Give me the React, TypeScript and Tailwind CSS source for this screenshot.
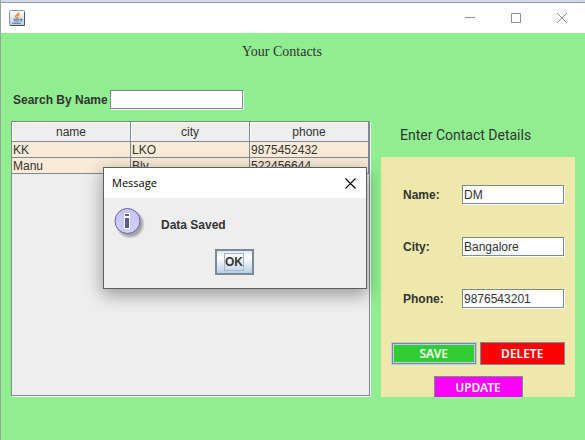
import { useState } from 'react';

const contacts = [
  { name: 'KK', city: 'LKO', phone: '9875452432' },
  { name: 'Manu', city: 'Blv', phone: '522456644' },
];

const columns = ['name', 'city', 'phone'];

const fieldClass =
  'h-[19px] border border-[#7a8a99] bg-white px-px pt-px text-xs text-[#333] shadow-[1px_1px_0_white] outline-none';

const cellClass = 'h-4 border-r border-b border-[#7a8a99] p-0 pt-[2px] pl-px';

function JavaIcon() {
  return (
    <svg width="16" height="16" viewBox="0 0 16 16" aria-hidden="true">
      <defs>
        <linearGradient id="tile" x1="0" y1="0" x2="0" y2="1">
          <stop offset="0" stopColor="#fdfdfe" />
          <stop offset="1" stopColor="#bccbdb" />
        </linearGradient>
      </defs>
      <rect x="0.5" y="0.5" width="15" height="15" rx="1" fill="url(#tile)" stroke="#8296ad" />
      <path d="M1 15.5h14.5V2" fill="none" stroke="#40556f" />
      <path d="M9.8 2.3C10.3 4.3 6 4.8 6.6 6.6c.2.7.9 1 .8 1.8M10.6 4.5C8.4 5.2 8 6 8.8 6.9c.5.6.2 1.1-.5 1.7" fill="none" stroke="#e8803a" strokeWidth="1.2" />
      <path d="M4.3 9.2h6.4M5 11h5.2M3.2 13.2h8.4M11 9.2c2.6-.8 2.4 1.6.2 2" fill="none" stroke="#53759b" strokeWidth="1.1" />
    </svg>
  );
}

function InfoIcon() {
  return (
    <svg width="32" height="32" viewBox="0 0 32 32" aria-hidden="true">
      <defs>
        <radialGradient id="drop">
          <stop offset="0.75" stopColor="#8b8b8b" stopOpacity="0.75" />
          <stop offset="1" stopColor="#8b8b8b" stopOpacity="0" />
        </radialGradient>
        <linearGradient id="ball" x1="0" y1="0" x2="0" y2="1">
          <stop offset="0" stopColor="#c4c4f4" />
          <stop offset="1" stopColor="#d0d0ff" />
        </linearGradient>
      </defs>
      <circle cx="16" cy="16" r="15" fill="url(#drop)" />
      <circle cx="13.5" cy="13" r="12.5" fill="url(#ball)" stroke="#666699" />
      <path d="M10 5h6v4h-6zM10 9h6v12h-6z" fill="#fff" />
      <path d="M11 6h4v2h-4zM11 10h4v10h-4z" fill="#5c5c91" />
    </svg>
  );
}

function TitleBar() {
  return (
    <header className="flex h-[31px] items-center justify-between border-t border-[#8f9aa6] bg-white pr-[17px] pl-2">
      <JavaIcon />
      <div className="flex gap-[35px] text-[#8f8f8f]">
        <button type="button" aria-label="Minimize">
          <svg width="11" height="11" viewBox="0 0 11 11"><path d="M0 4.5h10" stroke="currentColor" /></svg>
        </button>
        <button type="button" aria-label="Maximize">
          <svg width="11" height="11" viewBox="0 0 11 11"><path d="M.5.5h9v9h-9z" fill="none" stroke="currentColor" /></svg>
        </button>
        <button type="button" aria-label="Close">
          <svg width="11" height="11" viewBox="0 0 11 11"><path d="M0 0l10 10M10 0L0 10" stroke="currentColor" /></svg>
        </button>
      </div>
    </header>
  );
}

function ContactTable() {
  return (
    <div className="mr-px mb-px h-[275px] border border-[#7a8a99] bg-[#eee] shadow-[1px_1px_0_white]">
      <table className="w-full table-fixed border-separate border-spacing-0 text-xs leading-[13px] text-[#333]">
        <thead>
          <tr className="h-5">
            {columns.map((c) => (
              <th key={c} className="h-5 border-r border-b border-[#7a8a99] p-0 pt-[2px] font-normal shadow-[inset_1px_1px_0_white]">{c}</th>
            ))}
          </tr>
        </thead>
        <tbody>
          {contacts.map((row) => (
            <tr key={row.name} className="bg-[#faebd7]">
              <td className={cellClass}>{row.name}</td>
              <td className={cellClass}>{row.city}</td>
              <td className={cellClass}>{row.phone}</td>
            </tr>
          ))}
        </tbody>
      </table>
    </div>
  );
}

function DetailField({ id, label, value }: { id: string; label: string; value: string }) {
  return (
    <div className="flex items-center justify-between">
      <label htmlFor={id} className="pt-px text-xs font-bold">{label}</label>
      <input id={id} defaultValue={value} className={`${fieldClass} w-[102px]`} />
    </div>
  );
}

function ContactForm() {
  return (
    <form
      onSubmit={(e) => e.preventDefault()}
      className="h-60 overflow-hidden bg-[#eee8aa] pt-7"
    >
      <div className="flex flex-col gap-[33px] pr-[11px] pl-[22px]">
        <DetailField id="name" label="Name:" value="DM" />
        <DetailField id="city" label="City:" value="Bangalore" />
        <DetailField id="phone" label="Phone:" value="9876543201" />
      </div>
      <div className="mt-[34px] flex gap-[3px] px-[10px] font-['Noto_Sans',sans-serif] text-xs font-semibold text-white">
        <button type="submit" className="h-[23px] flex-1 border border-[#b8cfe5] bg-[#32cd32] shadow-[inset_0_0_0_1px_#7a8a99,inset_0_0_0_2px_#b8cfe5]">SAVE</button>
        <button type="button" className="h-[23px] flex-1 border border-[#7a8a99] bg-[#ff0000]">DELETE</button>
      </div>
      <div className="mt-[11px] flex justify-center font-['Noto_Sans',sans-serif] text-xs font-semibold text-white">
        <button type="button" className="h-[23px] w-[89px] border border-[#7a8a99] bg-[#ff00ff]">UPDATE</button>
      </div>
    </form>
  );
}

function MessageDialog({ onClose }: { onClose: () => void }) {
  return (
    <div
      role="dialog"
      aria-label="Message"
      className="absolute top-[167px] left-[102px] w-[264px] border border-[#5f5f5f] bg-[#eee] shadow-[0_5px_16px_1px_rgba(0,0,0,0.35)]"
    >
      <div className="flex h-[30px] items-center justify-between bg-white pr-[10px] pl-2 font-['Open_Sans','Noto_Sans',sans-serif] text-[11px] text-black">
        <span>Message</span>
        <button type="button" aria-label="Close message" onClick={onClose}>
          <svg width="11" height="11" viewBox="0 0 11 11"><path d="M.5.5l10 10M10.5.5l-10 10" stroke="currentColor" strokeWidth="1.1" /></svg>
        </button>
      </div>
      <div className="flex items-center gap-[15px] px-[10px] pt-[10px]">
        <InfoIcon />
        <p className="pt-px text-xs font-bold">Data Saved</p>
      </div>
      <div className="flex justify-center pt-[9px] pr-[2px] pb-[13px]">
        <button
          type="button"
          onClick={onClose}
          className="flex h-[26px] w-[39px] items-center justify-center border-2 border-[#7a8a99] bg-linear-to-b from-[#dde8f3] via-white via-30% to-[#b8cfe5] text-xs font-bold"
        >
          <span className="border border-[#a3b8cc] leading-4">OK</span>
        </button>
      </div>
    </div>
  );
}

export default function App() {
  const [open, setOpen] = useState(true);
  return (
    <div className="relative min-h-screen border-l border-[#8fa898] bg-[#90ee90] font-['Liberation_Sans',Arial,sans-serif] text-[#333]">
      <div className="h-[2px] bg-[#d3dce6]" />
      <TitleBar />
      <main className="px-[10px]">
        <h1 className="pt-[9px] pr-[22px] text-center font-['Liberation_Serif',serif] text-sm">Your Contacts</h1>
        <div className="flex items-end gap-[10px] pt-[28px]">
          <section className="flex-1">
            <div className="mb-3 flex items-center pl-[2px]">
              <label htmlFor="search" className="w-[97px] pt-px text-xs font-bold whitespace-nowrap">Search By Name :</label>
              <input id="search" className={`${fieldClass} w-[133px]`} />
            </div>
            <ContactTable />
          </section>
          <section className="w-[194px]">
            <h2 className="mb-3 pl-[19px] font-[Roboto,'Noto_Sans',sans-serif] text-sm whitespace-nowrap">Enter Contact Details</h2>
            <ContactForm />
          </section>
        </div>
      </main>
      {open && <MessageDialog onClose={() => setOpen(false)} />}
    </div>
  );
}
